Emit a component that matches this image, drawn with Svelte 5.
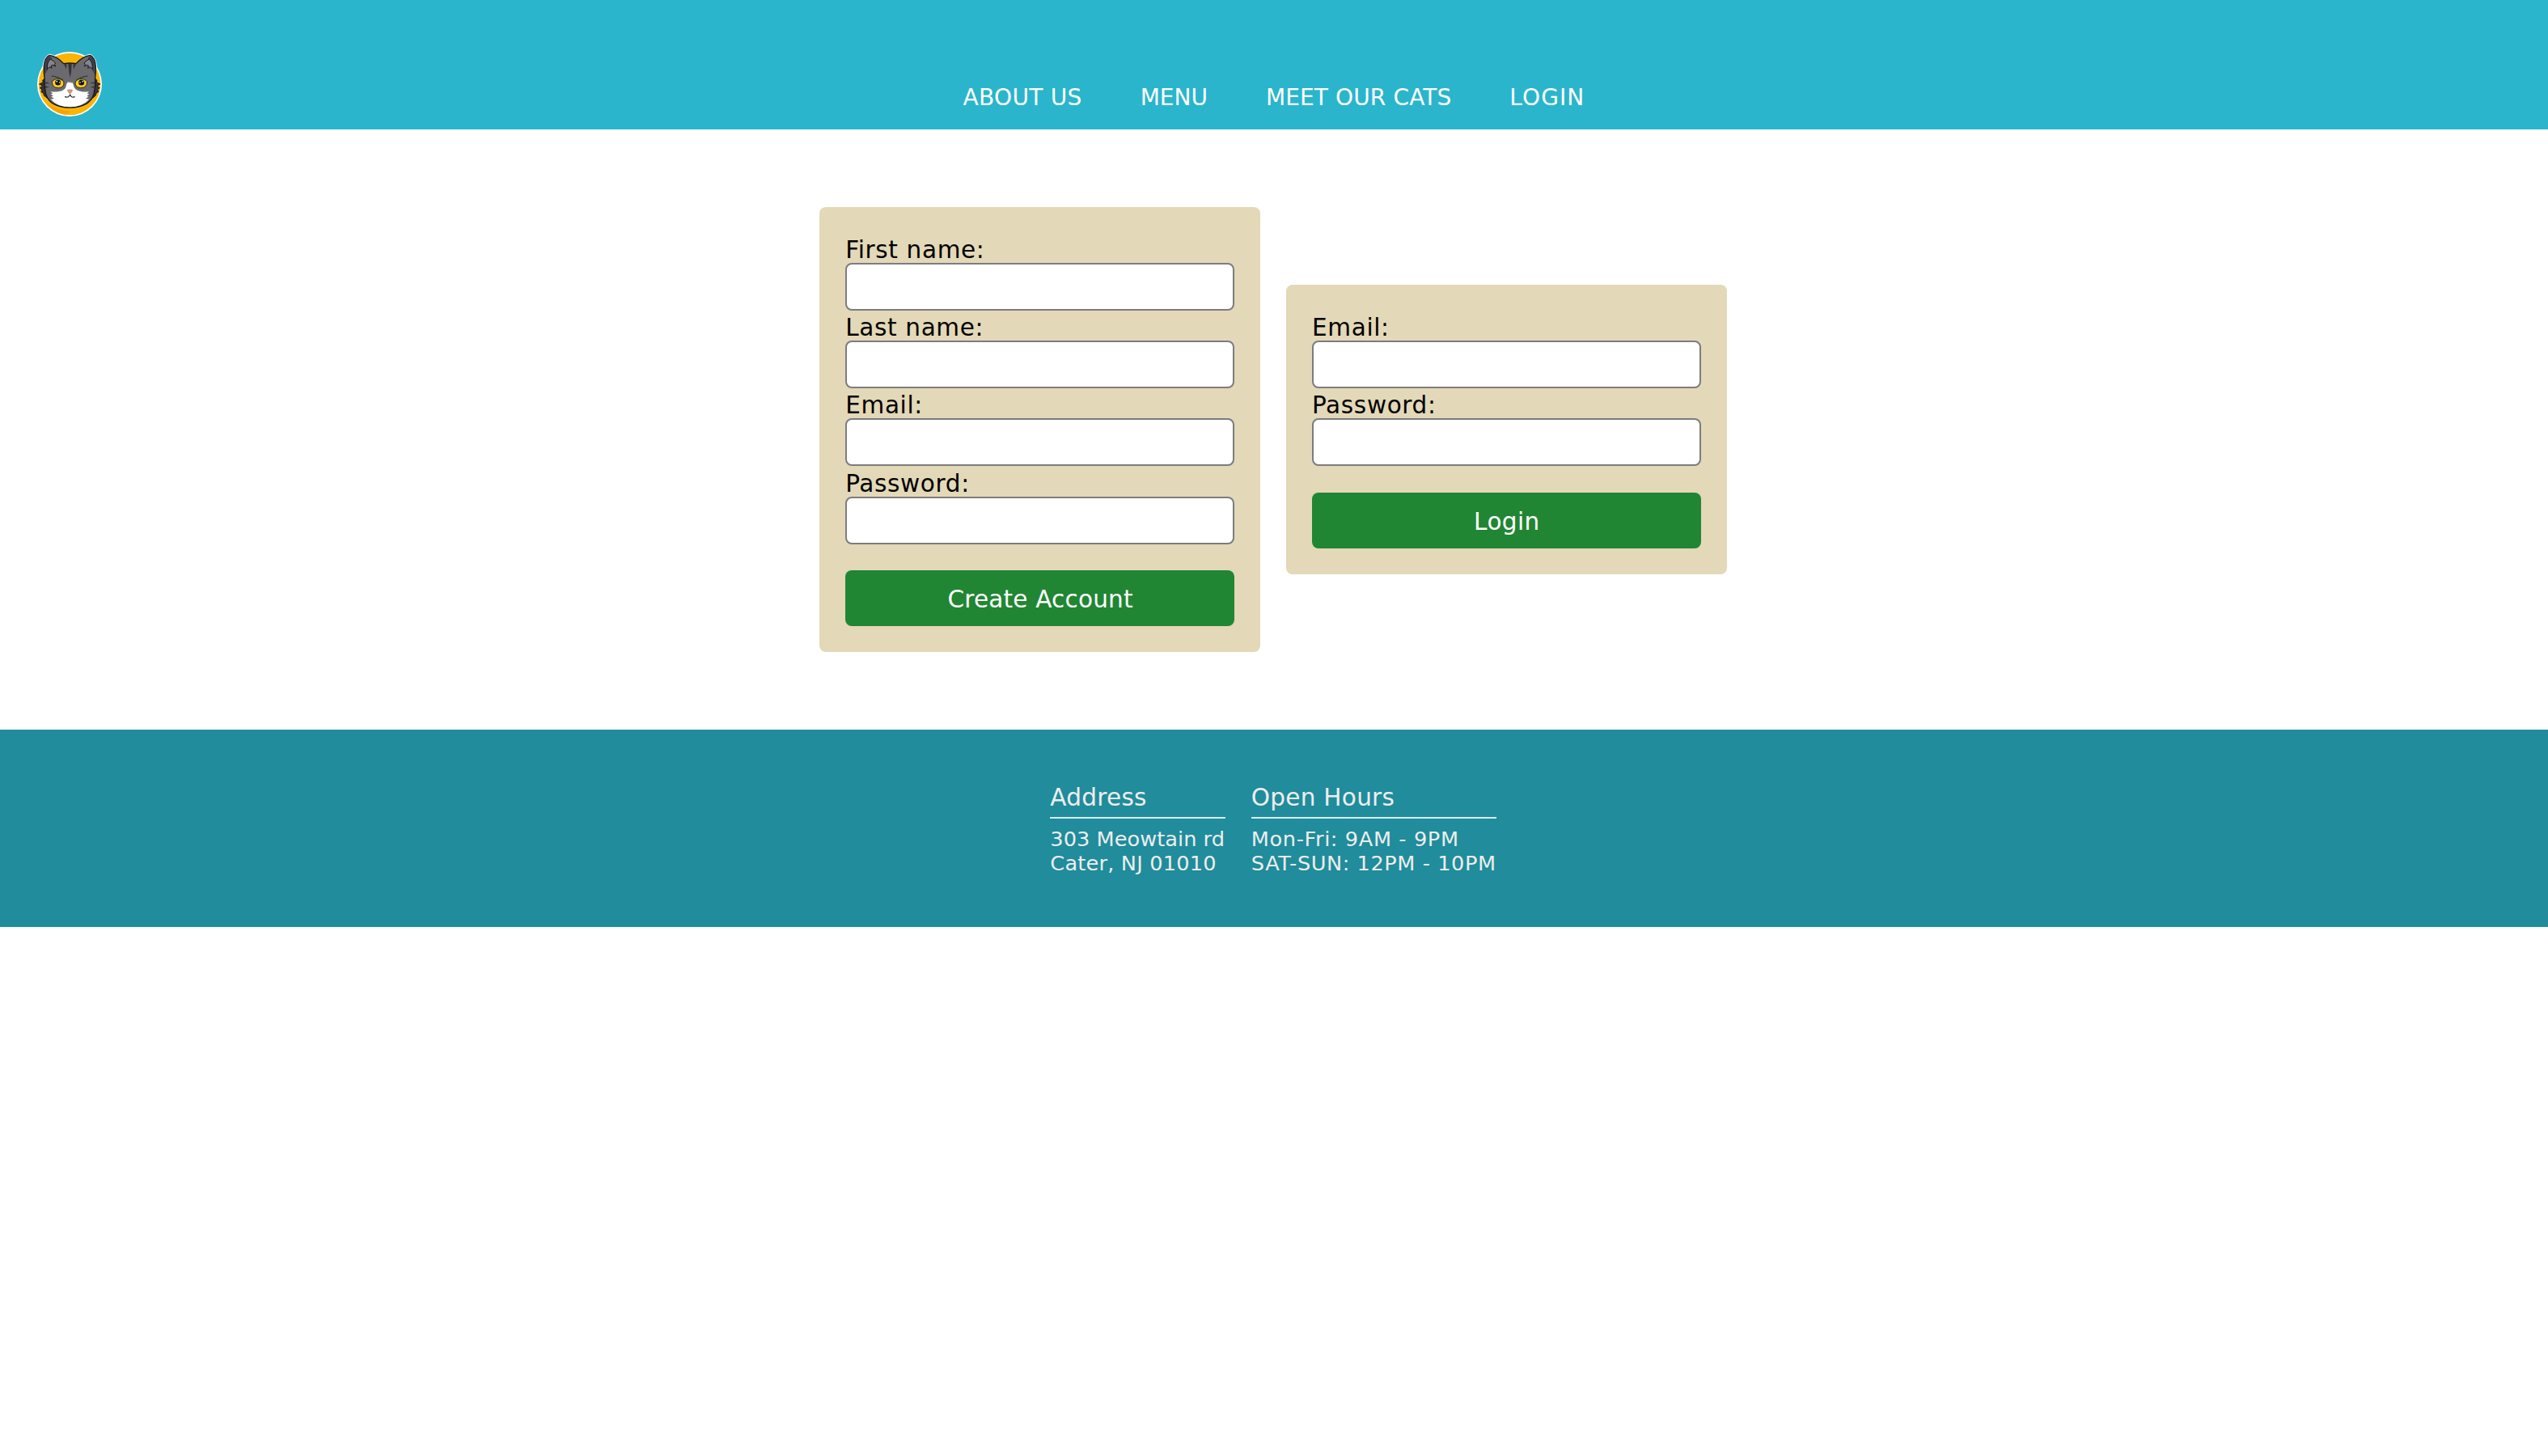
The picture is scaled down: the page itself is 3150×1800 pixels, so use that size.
<script>
  const links = [
    { text: 'ABOUT US', kind: 'regular' },
    { text: 'MENU', kind: 'compact' },
    { text: 'MEET OUR CATS', kind: 'long' },
    { text: 'LOGIN', kind: 'short' }
  ];
  const signupFields = [
    { label: 'First name:', type: 'text' },
    { label: 'Last name:', type: 'text' },
    { label: 'Email:', type: 'email' },
    { label: 'Password:', type: 'password' }
  ];
  const loginFields = signupFields.slice(2);
</script>

<header>
  <svg class="logo" viewBox="138 132 240 240" aria-label="Cat cafe logo">
    <!-- badge -->
    <circle cx="258" cy="252" r="120" fill="#fff" />
    <path d="M157 200 Q158 152 183 140 Q205 142 222 160 H296 Q313 142 335 140 Q360 152 361 200Z" fill="#fff" />
    <circle cx="258" cy="252" r="115" fill="#fab405" />
    <path d="M175 325 Q215 350 262 354 Q245 368 225 361 Q198 350 175 325Z" fill="#f5a10c" />
    <!-- cheek tufts -->
    <path d="M168 230 L158 238 L160 245 L146 252 L158 258 L148 266 L156 272 L153 281 L161 285 L163 294 L178 306Z M350 230 L360 238 L358 245 L372 252 L360 258 L370 266 L362 272 L365 281 L357 285 L355 294 L340 306Z" fill="#33343a" stroke="#15171c" stroke-width="3" stroke-linejoin="round" />
    <!-- head and ears -->
    <path d="M183 145 Q166 153 163 185 Q162 210 165 228 Q164 262 170 288 Q184 338 259 339 Q334 338 348 288 Q354 262 353 228 Q356 210 355 185 Q352 153 335 145 Q307 148 282 176 Q260 172 236 176 Q211 148 183 145Z" fill="#6a6a6f" stroke="#15171c" stroke-width="4" stroke-linejoin="round" />
    <path d="M182 147 Q167 157 165 188 Q165 206 167 218 Q171 206 177 199 Q173 177 193 155Z M336 147 Q351 157 353 188 Q353 206 351 218 Q347 206 341 199 Q345 177 325 155Z" fill="#3f4047" />
    <path d="M176 196 Q172 174 187 159 Q197 164 206 174 L202 179 L206 186 L198 182 L190 183 L192 193 L184 188Z M342 196 Q346 174 331 159 Q321 164 312 174 L316 179 L312 186 L320 182 L328 183 L326 193 L334 188Z" fill="#85868c" stroke="#15171c" stroke-width="3" />
    <!-- coat stripes -->
    <path d="M253 177 H266 L264 207 L260 229 L256 207Z M237 178 L247 177 L246 197Z M282 178 L272 177 L273 197Z M167 245 Q177 244 184 250 L168 250Z M168 259 L183 263 L169 266Z M351 245 Q341 244 334 250 L350 250Z M350 259 L335 263 L349 266Z" fill="#34353b" />
    <!-- muzzle -->
    <path d="M188 278 Q201 283 218 279 Q239 276 244 263 Q246 249 253 242 L256 248 L260 243 L264 250 L267 244 Q273 254 275 264 Q281 276 300 279 Q317 283 330 278 L323 287 L331 288 L322 297 L329 298 L317 307 L325 309 Q303 335 259 336 Q213 335 194 309 L202 307 L189 298 L198 297 L188 288 L196 287Z" fill="#fff" />
    <path d="M188 308 Q214 337 259 337 Q304 337 331 308 L310 305 H207Z" fill="#fff" />
    <!-- eyes and brows -->
    <path d="M191 222 Q215 224 233 237 M326 222 Q302 224 284 237" fill="none" stroke="#303137" stroke-width="3.500" />
    <path d="M193 242 Q215 222 236 242 Q241 264 217 266 Q193 266 193 242Z M323 242 Q301 222 280 242 Q275 264 299 266 Q323 266 323 242Z" fill="#ffcf18" stroke="#15171c" stroke-width="2.500" />
    <circle cx="215" cy="246" r="10.500" fill="#111216" />
    <circle cx="302" cy="246" r="10.500" fill="#111216" />
    <circle cx="211" cy="242" r="2.500" fill="#fff" />
    <circle cx="221" cy="246" r="2.500" fill="#fff" />
    <circle cx="297" cy="246" r="2.500" fill="#fff" />
    <circle cx="307" cy="242" r="2.500" fill="#fff" />
    <!-- nose and mouth -->
    <path d="M250 274 Q259 271 269 274 L264 284 L260 287 L255 284Z" fill="#dc9a70" stroke="#94684f" stroke-width="1.500" />
    <path d="M240 299 Q256 304 260 290 Q263 304 278 299" fill="none" stroke="#25262b" stroke-width="3.500" />
  </svg>
  <nav>
    {#each links as link}
      <a class={link.kind} href="#top">{link.text}</a>
    {/each}
  </nav>
</header>

{#snippet card(kind, fields, action)}
  <form class={kind}>
    {#each fields as field}
      <label>
        <span>{field.label}</span>
        <input type={field.type} />
      </label>
    {/each}
    <button type="button">{action}</button>
  </form>
{/snippet}

<main>
  {@render card('signup', signupFields, 'Create Account')}
  {@render card('login', loginFields, 'Login')}
</main>

<footer>
  <section class="address">
    <h2>Address</h2>
    <p>303 Meowtain rd</p>
    <p class="city">Cater, NJ 01010</p>
  </section>
  <section class="hours">
    <h2>Open Hours</h2>
    <p class="weekdays">Mon-Fri: 9AM - 9PM</p>
    <p class="weekend">SAT-SUN: 12PM - 10PM</p>
  </section>
</footer>

<style>
  :global(body) { background: #fff; font-family: Verdana, 'DejaVu Sans', sans-serif; font-size: 29.5px; }
  header { box-sizing: border-box; height: 160px; background: #2ab5cc; display: grid; grid-template-columns: 1fr auto 1fr; padding: 64px 46px 0 46px; }
  .logo { width: 80px; height: 80px; }
  nav { display: flex; gap: 72px; padding-top: 40px; font-size: 28px; line-height: 34px; }
  nav a { color: #fff; text-decoration: none; }
  .regular { letter-spacing: 0.3px; }
  .compact { letter-spacing: 0; }
  .long { letter-spacing: 0.12px; }
  .short { letter-spacing: 1.1px; }
  main { display: flex; justify-content: center; align-items: center; gap: 32px; padding: 96px 2px 96px 0; }
  form { box-sizing: border-box; width: 544.8px; padding: 32px; border-radius: 8px; background: #e3d8b7; }
  label { display: block; height: 96.2px; color: #000; letter-spacing: 0.65px; }
  label span { display: block; box-sizing: border-box; height: 37px; padding-top: 2px; line-height: 38px; }
  input { display: block; box-sizing: border-box; width: 100%; height: 59px; border: 2px solid #7c7c80; border-radius: 8px; background: #fff; }
  button { display: block; width: 100%; height: 69px; margin-top: 32px; padding: 3px 0 0 1px; border: 0; border-radius: 8px; background: #218633; color: #fff; font: inherit; }
  .signup button { letter-spacing: 0.2px; }
  .login button { letter-spacing: 0.4px; }
  footer { box-sizing: border-box; height: 244px; background: #208c9c; color: #eee; display: flex; justify-content: center; gap: 32px; padding: 66px 2px 0 0; }
  .address { width: 216.5px; }
  .hours { width: 302.8px; }
  h2 { margin: 0 0 10px; padding-bottom: 5px; border-bottom: 2px solid #d9eef0; font-size: 29.5px; font-weight: 400; line-height: 37px; letter-spacing: 0.27px; }
  p { margin: 0; font-size: 25.6px; line-height: 30.5px; white-space: nowrap; letter-spacing: 0.05px; }
  .city { letter-spacing: 0.2px; }
  .weekdays { letter-spacing: 0.62px; }
  .weekend { letter-spacing: 0.57px; }
</style>
